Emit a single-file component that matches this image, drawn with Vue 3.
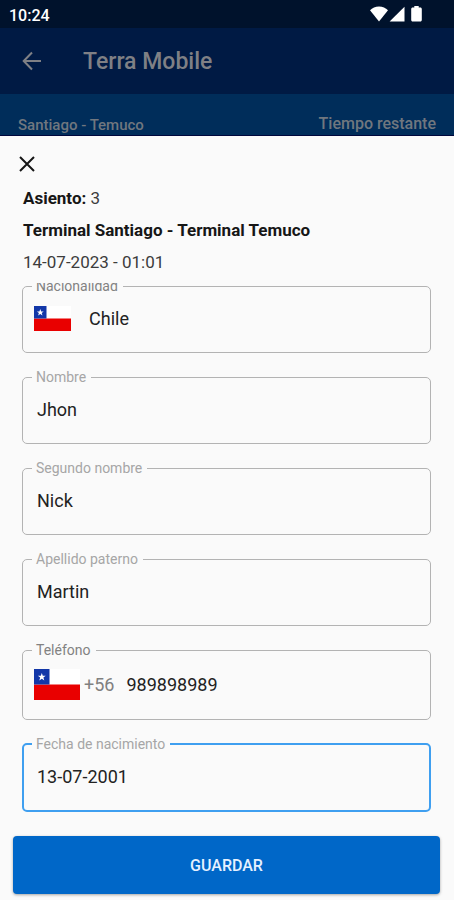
<script setup>
import { reactive } from 'vue'

const form = reactive({
  country: 'Chile',
  name: 'Jhon',
  middleName: 'Nick',
  lastName: 'Martin',
  phone: '989898989',
  birthDate: '13-07-2001',
})

const textFields = [
  { key: 'name', label: 'Nombre' },
  { key: 'middleName', label: 'Segundo nombre' },
  { key: 'lastName', label: 'Apellido paterno' },
]
</script>

<template>
  <div class="screen">
    <div class="status-bar">
      <span>10:24</span>
      <div class="status-icons">
        <svg width="18" height="16" viewBox="0 0 18 16" aria-hidden="true">
          <path d="M0 4.300C2.300 2 5.400.6 9 .6s6.700 1.400 9 3.700L9 15.500z" fill="#fff" />
        </svg>
        <svg width="16" height="16" viewBox="0 0 16 16" aria-hidden="true">
          <path d="M15.500.8v14.700H.6z" fill="#fff" />
        </svg>
        <svg class="battery" width="11" height="16" viewBox="0 0 11 16" aria-hidden="true">
          <path d="M3.300 0h4.400v1.500h1.600c.9 0 1.500.6 1.500 1.500v11c0 .9-.6 1.500-1.500 1.500H1.700C.8 15.500.2 14.900.2 14V3c0-.9.6-1.500 1.500-1.500h1.600z" fill="#fff" />
        </svg>
      </div>
    </div>

    <header class="app-bar">
      <button class="icon-button" type="button" aria-label="Volver">
        <svg width="20" height="20" viewBox="0 0 20 20" aria-hidden="true">
          <path d="M19 10H2M10 1.500L1.700 10l8.300 8.500" fill="none" stroke="#7f8085" stroke-width="2" />
        </svg>
      </button>
      <h1>Terra Mobile</h1>
    </header>

    <div class="trip-bar">
      <span class="route">Santiago - Temuco</span>
      <span class="remaining">Tiempo restante</span>
    </div>

    <main class="sheet">
      <button class="icon-button close" type="button" aria-label="Cerrar">
        <svg width="16" height="16" viewBox="0 0 16 16" aria-hidden="true">
          <path d="M1 1l14 14M15 1L1 15" fill="none" stroke="#161616" stroke-width="2" />
        </svg>
      </button>

      <div class="summary">
        <p><strong>Asiento:</strong> 3</p>
        <p><strong>Terminal Santiago - Terminal Temuco</strong></p>
        <p>14-07-2023 - 01:01</p>
      </div>

      <div class="scroll-area">
        <form id="passenger" class="fields" @submit.prevent>
          <fieldset class="field">
            <legend class="strong"><label for="country">Nacionalidad</label></legend>
            <div class="row country-row">
              <svg class="flag" width="37" height="25" viewBox="0 0 37 25" aria-hidden="true">
                <path d="M0 0h37v13H0z" fill="#fff" />
                <path d="M0 12.500h37V25H0z" fill="#e90000" />
                <path d="M0 0h12.500v12.500H0z" fill="#1237a8" />
                <path d="M6.300 3l.9 2.400h2.500L7.700 7l.8 2.500-2.200-1.500-2.200 1.500.8-2.500-2-1.600h2.500z" fill="#fff" />
              </svg>
              <select id="country" v-model="form.country">
                <option>Chile</option>
              </select>
            </div>
          </fieldset>

          <fieldset v-for="field in textFields" :key="field.key" class="field">
            <legend><label :for="field.key">{{ field.label }}</label></legend>
            <div class="row">
              <input :id="field.key" v-model="form[field.key]" type="text" />
            </div>
          </fieldset>

          <fieldset class="field phone">
            <legend class="strong"><label for="phone">Teléfono</label></legend>
            <div class="row phone-row">
              <svg class="flag" width="46" height="31" viewBox="0 0 46 31" aria-hidden="true">
                <path d="M0 0h46v16H0z" fill="#fff" />
                <path d="M0 15.500h46V31H0z" fill="#e90000" />
                <path d="M0 0h15.500v15.500H0z" fill="#1237a8" />
                <path d="M7.800 4l1 2.800h2.900L9.400 8.600l.9 2.900-2.500-1.700-2.500 1.700.9-2.900-2.300-1.800h2.900z" fill="#fff" />
              </svg>
              <span class="prefix">+56</span>
              <input id="phone" v-model="form.phone" type="tel" />
            </div>
          </fieldset>

          <fieldset class="field active">
            <legend><label for="birth">Fecha de nacimiento</label></legend>
            <div class="row">
              <input id="birth" v-model="form.birthDate" type="text" />
            </div>
          </fieldset>
        </form>
      </div>

      <button class="save" type="submit" form="passenger">GUARDAR</button>
    </main>
  </div>
</template>

<style>
body {
  background: #fafafa;
}
</style>

<style scoped>
.screen {
  display: flex;
  flex-direction: column;
  min-height: 100vh;
  font-family: Roboto, "Liberation Sans", sans-serif;
  font-size: 17px;
  color: #161616;
  background: #fafafa;
}

.status-bar {
  display: flex;
  align-items: center;
  justify-content: space-between;
  height: 28px;
  padding: 2px 32px 0 9px;
  box-sizing: border-box;
  background: #00122c;
  color: #fff;
  font-size: 16px;
  font-weight: 500;
}

.status-icons {
  display: flex;
  gap: 1px;
  padding-bottom: 2px;
}

.battery {
  margin-left: 5px;
}

.icon-button {
  display: flex;
  padding: 0;
  border: 0;
  background: none;
}

.app-bar {
  display: flex;
  align-items: center;
  gap: 41px;
  height: 66px;
  padding: 0 22px;
  background: #001a44;
}

.app-bar h1 {
  margin: 0;
  color: #7f8085;
  font-size: 23px;
  font-weight: 500;
}

.trip-bar {
  display: flex;
  align-items: center;
  justify-content: space-between;
  height: 42px;
  padding: 17px 18px 0;
  box-sizing: border-box;
  border-bottom: 1px solid #00073c;
  background: #002d5a;
  color: #70777f;
}

.route {
  padding-top: 4px;
  font-size: 15px;
  font-weight: 500;
}

.remaining {
  font-size: 16px;
  font-weight: 500;
}

.sheet {
  display: flex;
  flex: 1;
  flex-direction: column;
  padding: 20px 14px 6px 13px;
}

.close {
  align-self: flex-start;
  margin-left: 6px;
}

.summary {
  padding: 10px 10px 0;
}

.summary p {
  margin: 0;
  color: #3c3c3c;
  line-height: 32px;
}

.summary strong {
  color: #161616;
  font-weight: 700;
}

.scroll-area {
  margin-top: 5px;
  padding: 0 9px;
  overflow: hidden;
}

.fields {
  display: flex;
  flex-direction: column;
  gap: 16px;
  margin-top: -5px;
}

.field {
  min-width: 0;
  margin: 0;
  padding: 0 10px 9px;
  border: 1px solid #b3b3b3;
  border-radius: 5px;
}

.field legend {
  padding: 0 5px 0 4px;
  margin-left: -1px;
  color: #a6a6a6;
  font-size: 14px;
  line-height: 16px;
}

.field legend.strong {
  color: #828282;
}

.row {
  display: flex;
  align-items: center;
  height: 49px;
  padding: 0 4px;
}

.row input,
.row select {
  flex: 1;
  min-width: 0;
  padding: 0;
  border: 0;
  outline: 0;
  appearance: none;
  background: none;
  color: #222;
  font: inherit;
  font-size: 18px;
}

.country-row {
  gap: 18px;
  padding-left: 1px;
}

.phone {
  padding-bottom: 8px;
}

.phone-row {
  height: 53px;
  padding-left: 1px;
}

.flag {
  flex: none;
}

.prefix {
  padding: 0 12px 0 4px;
  color: #808080;
  font-size: 18px;
}

.active {
  padding-left: 9px;
  padding-right: 9px;
  border: 2px solid #3f9ff0;
}

.save {
  height: 58px;
  margin-top: 24px;
  padding: 0;
  border: 0;
  border-radius: 4px;
  background: #0067c8;
  box-shadow: 0 1px 3px rgba(0, 0, 0, 0.35);
  color: #e6f1ff;
  font: 500 16px Roboto, "Liberation Sans", sans-serif;
}
</style>
